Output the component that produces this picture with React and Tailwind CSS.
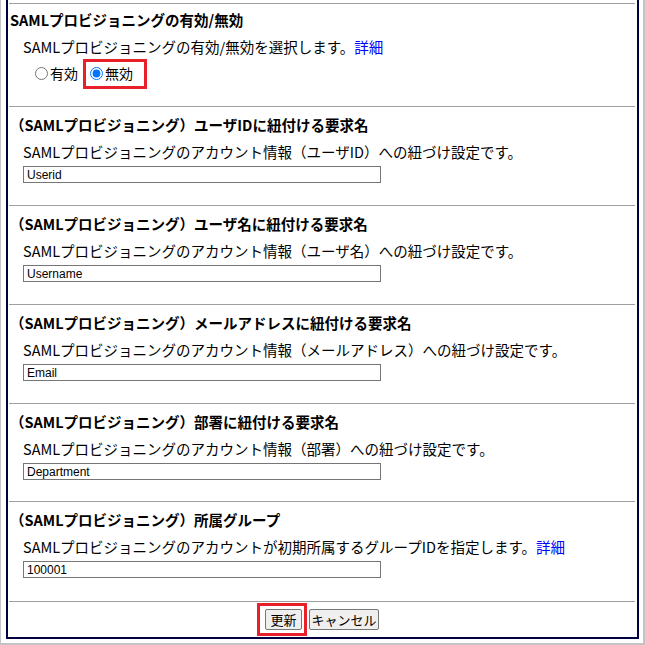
import React from "react";

const jp = { fontFamily: '"Noto Sans CJK JP", "Noto Sans", sans-serif' };

function Field({ title, desc, value, link, h }) {
  return (
    <div className={`border-t border-[#a0a0a0] pt-[8px] overflow-hidden ${h}`}>
      <div className="pl-[1px] text-[14.5px] leading-[20px] font-bold text-black whitespace-nowrap">{title}</div>
      <div className="pl-[14px] mt-[7px] text-[14.5px] leading-[20px] text-black whitespace-nowrap">
        {desc}
        {link && <span className="text-[#0000ff]">詳細</span>}
      </div>
      <div className="pl-[14px] mt-[4px]">
        <div
          className="w-[358px] h-[17px] border border-[#767676] bg-white flex items-center pl-[3px] text-[12px] text-black"
          style={{ fontFamily: '"Liberation Sans", Arial, sans-serif' }}
        >
          {value}
        </div>
      </div>
    </div>
  );
}

export default function App() {
  return (
    <div
      className="w-[645px] h-[645px] bg-white border-l border-r-2 border-b-2 border-[#c4c4c4] pl-[5px] pr-[4px] pb-[4px] flex [text-spacing-trim:space-all]"
      style={jp}
    >
      <div className="flex-1 border-l-2 border-r-2 border-b-2 border-[#000040] pt-[3px] pl-[1px] pr-[2px] flex flex-col">
        {/* Section 1 */}
        <div className="border-t border-[#a0a0a0] pt-[6px] h-[103px] overflow-hidden">
          <div className="pl-[1px] text-[14.5px] leading-[20px] font-bold text-black">SAMLプロビジョニングの有効/無効</div>
          <div className="pl-[14px] mt-[7px] text-[14.5px] leading-[20px] text-black whitespace-nowrap">
            SAMLプロビジョニングの有効/無効を選択します。<span className="text-[#0000ff]">詳細</span>
          </div>
          <div className="mt-[6px] h-[20px] flex items-center pl-[26px] text-[14px] leading-[20px] text-black">
            <label className="h-[20px] flex items-center">
              <input type="radio" name="saml" className="w-[13px] h-[13px] m-0" />
              <span className="ml-[2px]">有効</span>
            </label>
            <label className="relative h-[20px] flex items-center ml-[12px]">
              <input type="radio" name="saml" defaultChecked className="w-[13px] h-[13px] m-0" />
              <span className="ml-[2px]">無効</span>
              <span className="absolute left-[-7px] top-[-4px] w-[64px] h-[30px] border-[3px] border-[#e8202a]"></span>
            </label>
          </div>
        </div>

        <Field
          h="h-[99px]"
          title="（SAMLプロビジョニング）ユーザIDに紐付ける要求名"
          desc="SAMLプロビジョニングのアカウント情報（ユーザID）への紐づけ設定です。"
          value="Userid"
        />
        <Field
          h="h-[99px]"
          title="（SAMLプロビジョニング）ユーザ名に紐付ける要求名"
          desc="SAMLプロビジョニングのアカウント情報（ユーザ名）への紐づけ設定です。"
          value="Username"
        />
        <Field
          h="h-[99px]"
          title="（SAMLプロビジョニング）メールアドレスに紐付ける要求名"
          desc="SAMLプロビジョニングのアカウント情報（メールアドレス）への紐づけ設定です。"
          value="Email"
        />
        <Field
          h="h-[98px]"
          title="（SAMLプロビジョニング）部署に紐付ける要求名"
          desc="SAMLプロビジョニングのアカウント情報（部署）への紐づけ設定です。"
          value="Department"
        />
        <Field
          h="h-[100px]"
          title="（SAMLプロビジョニング）所属グループ"
          desc="SAMLプロビジョニングのアカウントが初期所属するグループIDを指定します。"
          value="100001"
          link
        />

        {/* Buttons */}
        <div className="border-t border-[#a0a0a0] pt-[7px] flex justify-center gap-[7px]">
          <div className="relative">
            <button className="w-[37px] h-[21px] bg-[#efefef] border border-[#767676] rounded-[2px] text-[13px] leading-none text-black flex items-center justify-center">
              更新
            </button>
            <span className="absolute left-[-8px] top-[-6px] w-[50px] h-[33px] border-[3px] border-[#e8202a]"></span>
          </div>
          <button className="w-[70px] h-[21px] bg-[#efefef] border border-[#767676] rounded-[2px] text-[13px] leading-none text-black flex items-center justify-center">
            キャンセル
          </button>
        </div>
      </div>
    </div>
  );
}
